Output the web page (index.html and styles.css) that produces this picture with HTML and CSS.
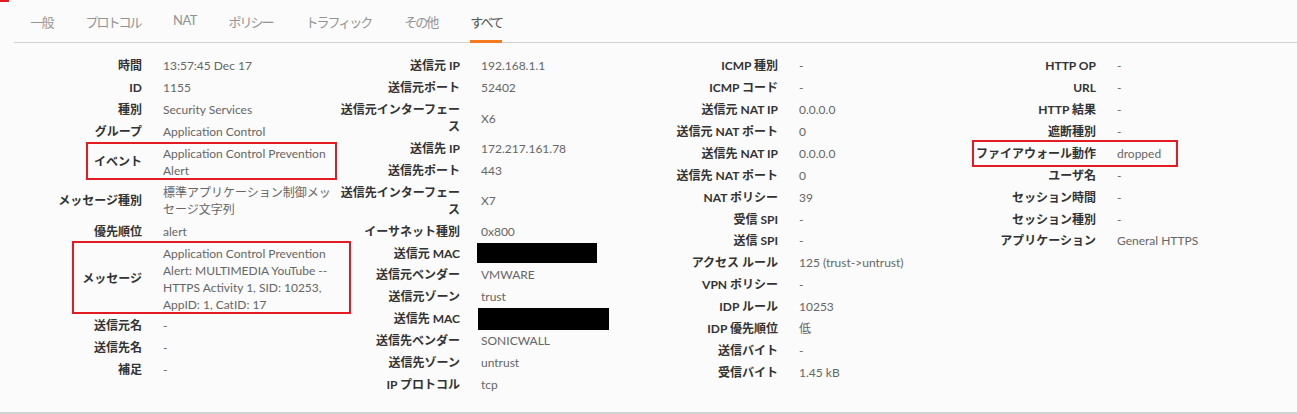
FILE: index.html
```html
<!DOCTYPE html>
<html lang="ja">
<head>
  <meta charset="UTF-8" />
  <title>ログ詳細</title>
  <link rel="stylesheet" href="styles.css">
</head>
<body>
  <span class="corner-mark"></span>

  <div class="tabs">
    <span class="tab">一般</span>
    <span class="tab">プロトコル</span>
    <span class="tab tab-latin">NAT</span>
    <span class="tab">ポリシー</span>
    <span class="tab">トラフィック</span>
    <span class="tab">その他</span>
    <span class="tab active">すべて</span>
  </div>

  <div class="details">
    <!-- 一般 -->
    <div class="col">
      <div class="row"><div class="k">時間</div><div class="v">13:57:45 Dec 17</div></div>
      <div class="row"><div class="k">ID</div><div class="v">1155</div></div>
      <div class="row"><div class="k">種別</div><div class="v">Security Services</div></div>
      <div class="row"><div class="k">グループ</div><div class="v">Application Control</div></div>
      <div class="row"><div class="k">イベント</div><div class="v">Application Control Prevention Alert</div><span class="mark mark-event"></span></div>
      <div class="row"><div class="k">メッセージ種別</div><div class="v">標準アプリケーション制御メッセージ文字列</div></div>
      <div class="row"><div class="k">優先順位</div><div class="v">alert</div></div>
      <div class="row"><div class="k">メッセージ</div><div class="v">Application Control Prevention Alert: MULTIMEDIA YouTube -- HTTPS Activity 1, SID: 10253, AppID: 1, CatID: 17</div><span class="mark mark-msg"></span></div>
      <div class="row"><div class="k">送信元名</div><div class="v">-</div></div>
      <div class="row"><div class="k">送信先名</div><div class="v">-</div></div>
      <div class="row"><div class="k">補足</div><div class="v">-</div></div>
    </div>

    <!-- プロトコル -->
    <div class="col">
      <div class="row"><div class="k">送信元 IP</div><div class="v">192.168.1.1</div></div>
      <div class="row"><div class="k">送信元ポート</div><div class="v">52402</div></div>
      <div class="row"><div class="k">送信元インターフェース</div><div class="v">X6</div></div>
      <div class="row"><div class="k">送信先 IP</div><div class="v">172.217.161.78</div></div>
      <div class="row"><div class="k">送信先ポート</div><div class="v">443</div></div>
      <div class="row"><div class="k">送信先インターフェース</div><div class="v">X7</div></div>
      <div class="row"><div class="k">イーサネット種別</div><div class="v">0x800</div></div>
      <div class="row"><div class="k">送信元 MAC</div><div class="v"><span class="redact redact-src"></span></div></div>
      <div class="row"><div class="k">送信元ベンダー</div><div class="v">VMWARE</div></div>
      <div class="row"><div class="k">送信元ゾーン</div><div class="v">trust</div></div>
      <div class="row"><div class="k">送信先 MAC</div><div class="v"><span class="redact redact-dst"></span></div></div>
      <div class="row"><div class="k">送信先ベンダー</div><div class="v">SONICWALL</div></div>
      <div class="row"><div class="k">送信先ゾーン</div><div class="v">untrust</div></div>
      <div class="row"><div class="k">IP プロトコル</div><div class="v">tcp</div></div>
    </div>

    <!-- NAT / ポリシー -->
    <div class="col">
      <div class="row"><div class="k">ICMP 種別</div><div class="v">-</div></div>
      <div class="row"><div class="k">ICMP コード</div><div class="v">-</div></div>
      <div class="row"><div class="k">送信元 NAT IP</div><div class="v">0.0.0.0</div></div>
      <div class="row"><div class="k">送信元 NAT ポート</div><div class="v">0</div></div>
      <div class="row"><div class="k">送信先 NAT IP</div><div class="v">0.0.0.0</div></div>
      <div class="row"><div class="k">送信先 NAT ポート</div><div class="v">0</div></div>
      <div class="row"><div class="k">NAT ポリシー</div><div class="v">39</div></div>
      <div class="row"><div class="k">受信 SPI</div><div class="v">-</div></div>
      <div class="row"><div class="k">送信 SPI</div><div class="v">-</div></div>
      <div class="row"><div class="k">アクセス ルール</div><div class="v">125 (trust-&gt;untrust)</div></div>
      <div class="row"><div class="k">VPN ポリシー</div><div class="v">-</div></div>
      <div class="row"><div class="k">IDP ルール</div><div class="v">10253</div></div>
      <div class="row"><div class="k">IDP 優先順位</div><div class="v">低</div></div>
      <div class="row"><div class="k">送信バイト</div><div class="v">-</div></div>
      <div class="row"><div class="k">受信バイト</div><div class="v">1.45 kB</div></div>
    </div>

    <!-- その他 -->
    <div class="col">
      <div class="row"><div class="k">HTTP OP</div><div class="v">-</div></div>
      <div class="row"><div class="k">URL</div><div class="v">-</div></div>
      <div class="row"><div class="k">HTTP 結果</div><div class="v">-</div></div>
      <div class="row"><div class="k">遮断種別</div><div class="v">-</div></div>
      <div class="row"><div class="k">ファイアウォール動作</div><div class="v">dropped</div><span class="mark mark-fw"></span></div>
      <div class="row"><div class="k">ユーザ名</div><div class="v">-</div></div>
      <div class="row"><div class="k">セッション時間</div><div class="v">-</div></div>
      <div class="row"><div class="k">セッション種別</div><div class="v">-</div></div>
      <div class="row"><div class="k">アプリケーション</div><div class="v">General HTTPS</div></div>
    </div>
  </div>
</body>
</html>
```

FILE: styles.css
```css
* {
  box-sizing: border-box;
}
html, body {
  height: 100%;
}
body {
  margin: 0;
  background-color: #fbfbfb;
  font-family: Lato, "Noto Sans CJK JP", sans-serif;
  font-size: 12px;
  color: #666;
  border-bottom: 2px solid #d4d4d4;
  position: relative;
}

/* 左上の赤い切れ端 */
.corner-mark {
  position: absolute;
  top: 0;
  left: 0;
  width: 9px;
  height: 2px;
  background: #e31b23;
}

/* タブ */
.tabs {
  display: flex;
  margin-left: 14px;
  height: 43px;
  border-bottom: 1px solid #d0d0d0;
}
.tab {
  position: relative;
  padding: 12px 16.5px 0;
  font-size: 13px;
  letter-spacing: -2px;
  color: #939393;
  white-space: nowrap;
}
.tab-latin {
  letter-spacing: -0.5px;
  padding: 12px 15px 0 16px;
}
.tab.active {
  color: #555;
}
.tab.active::after {
  content: "";
  position: absolute;
  left: 16.5px;
  right: 16.5px;
  bottom: -1px;
  height: 3px;
  background: #f47b20;
}

/* 詳細 */
.details {
  display: grid;
  grid-template-columns: repeat(4, 318px);
  padding: 12px 0 0 14px;
}
.row {
  position: relative;
  display: grid;
  grid-template-columns: 128px 1fr;
  column-gap: 21px;
  align-items: center;
  padding: 2.45px 0;
  line-height: 17px;
}
.k {
  text-align: right;
  font-weight: bold;
  color: #333;
}
.v {
  color: #666;
}

/* 黒塗り（行の高さは変えない） */
.redact {
  display: block;
  background: #000;
}
.redact-src {
  width: 120px;
  height: 20px;
  margin: -1.5px 0 -1.5px -4px;
}
.redact-dst {
  width: 131px;
  height: 22px;
  margin: -2.5px 0 -2.5px -3px;
}

/* 赤枠の注釈 */
.mark {
  position: absolute;
  border: 2px solid #e31b23;
}
.mark-event {
  top: -1px;
  bottom: 1px;
  left: 72px;
  right: -5px;
}
.mark-msg {
  top: -1px;
  bottom: 1px;
  left: 58px;
  right: -19px;
}
.mark-fw {
  top: -3px;
  bottom: -3px;
  left: 4px;
  right: 108px;
}
```
